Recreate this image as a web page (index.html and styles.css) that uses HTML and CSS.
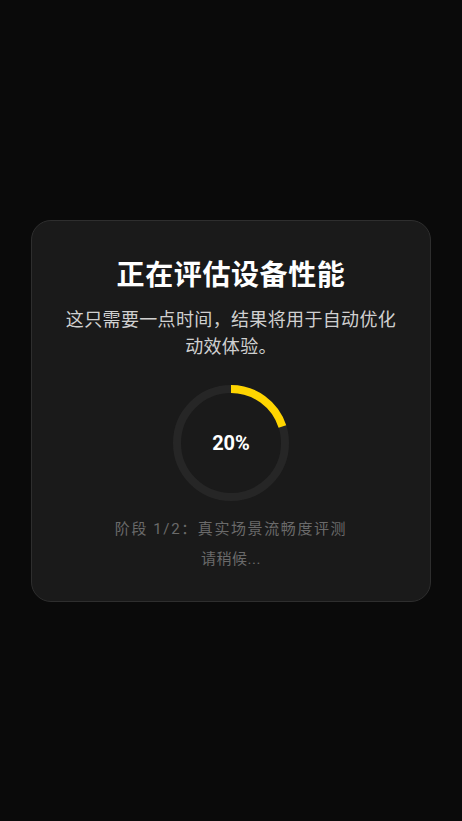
FILE: index.html
```html
<!DOCTYPE html>
<html lang="zh-CN">
<head>
    <meta charset="UTF-8">
    <meta name="viewport" content="width=device-width, initial-scale=1.0">
    <title>性能评估</title>
    <link rel="stylesheet" href="styles.css">
</head>
<body>
    <div class="card">
        <h1 class="title">正在评估设备性能</h1>
        <p class="desc">这只需要一点时间，结果将用于自动优化动效体验。</p>
        <div class="ring">
            <svg width="116" height="116" viewBox="0 0 116 116">
                <circle class="track" cx="58" cy="58" r="54"></circle>
                <circle class="bar" cx="58" cy="58" r="54" transform="rotate(-90 58 58)"></circle>
            </svg>
            <span class="percent">20%</span>
        </div>
        <p class="stage">阶段 1/2：真实场景流畅度评测</p>
        <p class="wait">请稍候...</p>
    </div>
</body>
</html>
```

FILE: styles.css
```css
*{
    margin: 0;
    padding: 0;
    box-sizing: border-box;
}
body{
    background-color: #0a0a0a;
    min-height: 100vh;
    display: flex;
    justify-content: center;
    align-items: center;
    font-family: "Roboto", "Noto Sans CJK SC", sans-serif;
}
.card{
    width: 400px;
    background-color: #1a1a1a;
    border: 1px solid #2e2e2e;
    border-radius: 20px;
    padding: 37px 30px 31px;
    display: flex;
    flex-direction: column;
    align-items: center;
    text-align: center;
}
.title{
    color: #fff;
    font-size: 28px;
    line-height: 36px;
    font-weight: bold;
    letter-spacing: 0.6px;
}
.desc{
    margin-top: 12px;
    color: #d0d0d0;
    font-size: 18px;
    line-height: 27px;
    letter-spacing: 0.35px;
}
.ring{
    position: relative;
    width: 116px;
    height: 116px;
    margin-top: 25px;
}
.ring svg{
    display: block;
}
.track, .bar{
    fill: none;
    stroke-width: 8;
}
.track{
    stroke: #262626;
}
.bar{
    stroke: #ffd500;
    stroke-dasharray: 67.86 339.29;
}
.percent{
    position: absolute;
    inset: 0;
    display: flex;
    align-items: center;
    justify-content: center;
    color: #fff;
    font-size: 20px;
    font-weight: bold;
}
.stage{
    margin-top: 17px;
    color: #6a6a6a;
    font-size: 15px;
    line-height: 22px;
    letter-spacing: 1.6px;
}
.wait{
    margin-top: 8px;
    color: #6a6a6a;
    font-size: 15px;
    line-height: 22px;
    letter-spacing: 0.5px;
}
```
